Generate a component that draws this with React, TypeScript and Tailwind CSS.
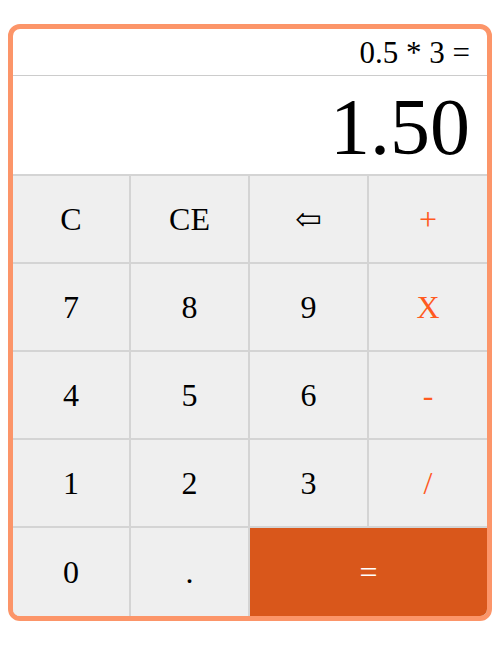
export default function App() {
  const keys = [
    { label: "C" },
    { label: "CE" },
    { label: "⇦" },
    { label: "+", op: true },
    { label: "7" },
    { label: "8" },
    { label: "9" },
    { label: "X", op: true },
    { label: "4" },
    { label: "5" },
    { label: "6" },
    { label: "-", op: true },
    { label: "1" },
    { label: "2" },
    { label: "3" },
    { label: "/", op: true },
  ];

  return (
    <div className="bg-white p-2 pt-[24px] font-['Liberation_Serif','DejaVu_Serif',serif]">
      <div className="border-[5px] border-[#fc9569] rounded-[12px] overflow-hidden bg-white">
        {/* display */}
        <div className="h-[47px] border-b border-[#cccccc] flex items-center justify-end pr-[17px] text-[31px] leading-none text-black">
          0.5 * 3 =
        </div>
        <div className="h-[98px] flex items-center justify-end pr-[17px] pt-[4px] text-[80px] leading-none text-black">
          1.50
        </div>

        {/* keypad */}
        <div className="grid grid-cols-[116px_117px_117px_1fr] gap-[2px] bg-[#d4d4d4] pt-[2px]">
          {keys.map((k) => (
            <button
              key={k.label}
              className={`h-[86px] bg-[#efefef] flex items-center justify-center text-[32px] leading-none ${
                k.op ? "text-[#ff5a1f]" : "text-black"
              }`}
            >
              {k.label}
            </button>
          ))}
          <button className="h-[88px] bg-[#efefef] flex items-center justify-center text-[32px] leading-none text-black">
            0
          </button>
          <button className="h-[88px] bg-[#efefef] flex items-center justify-center text-[32px] leading-none text-black">
            .
          </button>
          <button className="col-span-2 h-[88px] bg-[#d9571b] flex items-center justify-center text-[32px] leading-none text-white">
            =
          </button>
        </div>
      </div>
    </div>
  );
}
